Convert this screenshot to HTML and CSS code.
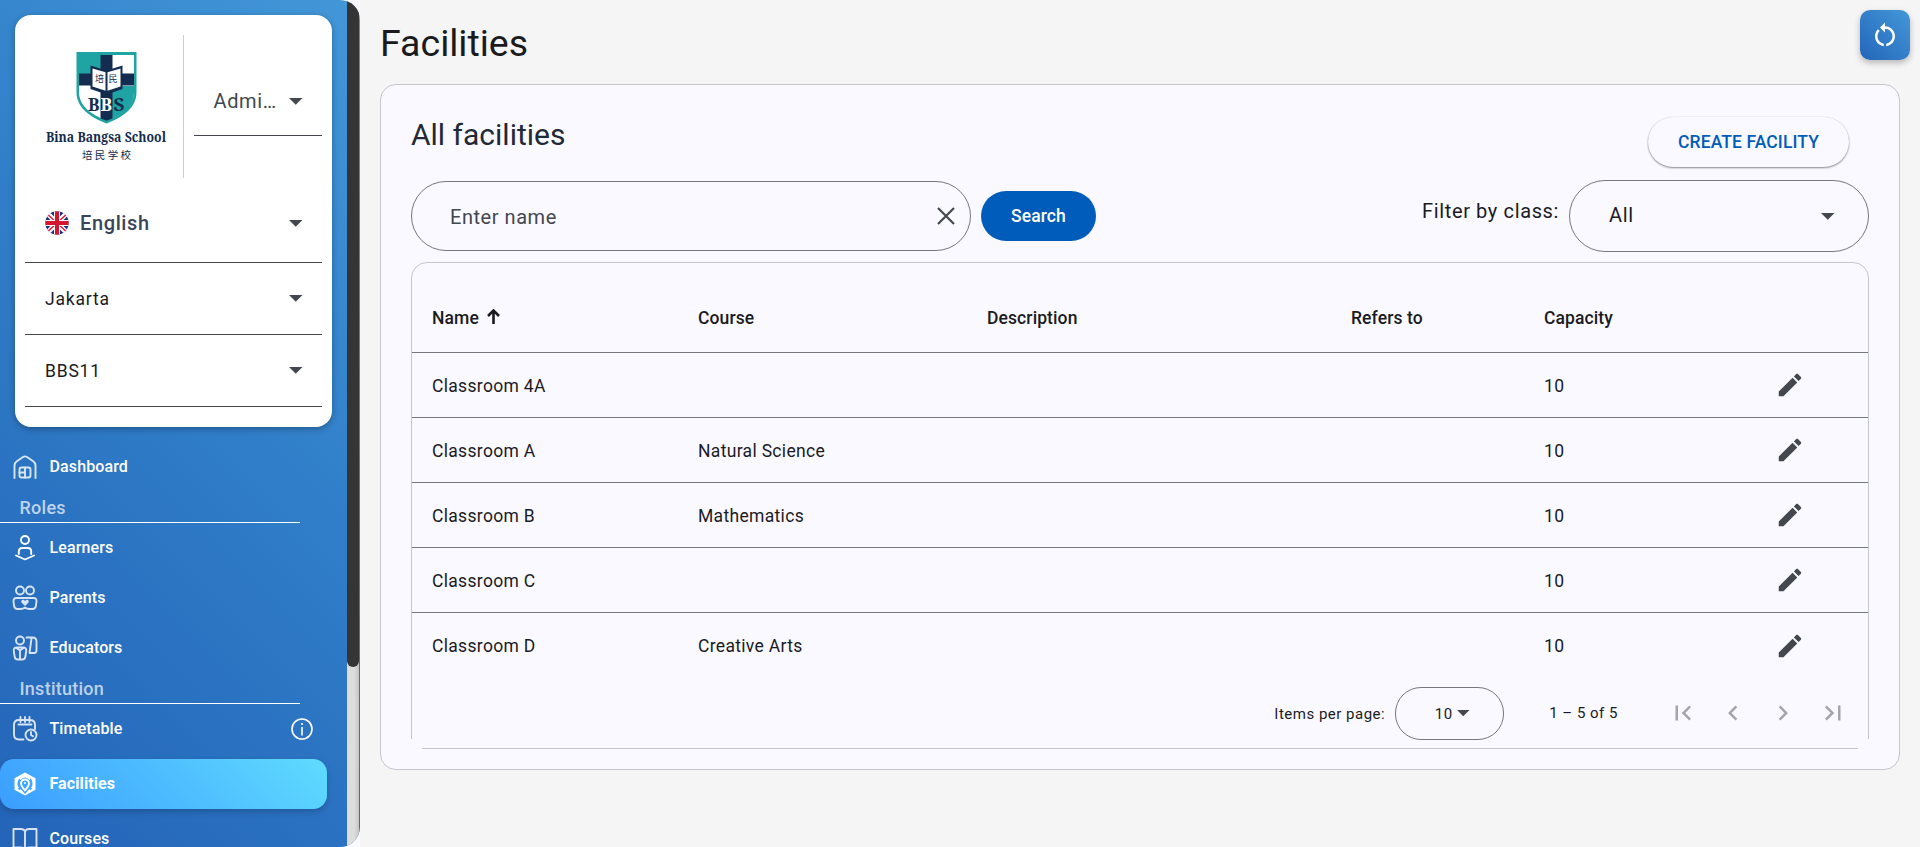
FILE: index.html
```html
<!DOCTYPE html>
<html lang="en">
<head>
<meta charset="utf-8">
<title>Facilities</title>
<link rel="stylesheet" href="styles.css">
</head>
<body>
<svg class="defs" width="0" height="0">
  <symbol id="caret" viewBox="0 0 14 7"><path d="M0 0h13.5L6.75 6.8z"/></symbol>
  <symbol id="pencil" viewBox="0 0 24 24"><path d="M3 17.25V21h3.75L17.81 9.94l-3.75-3.75L3 17.25zM20.71 7.04c.39-.39.39-1.02 0-1.41l-2.34-2.34c-.39-.39-1.02-.39-1.41 0l-1.83 1.83 3.75 3.75 1.83-1.83z"/></symbol>
</svg>
<div class="shell">
  <aside class="sidebar">
    <div class="content">
      <section class="profile">
        <div class="brand-row">
          <div class="brand">
            <svg class="logo" width="130" height="116" viewBox="0 0 130 116" role="img" aria-label="Bina Bangsa School">
              <path d="M32.5 2h60v40c0 16-14 25.500-30 31.500C46.500 67.500 32.500 58 32.500 42z" fill="#20a3a3"/>
              <path d="M62.500 5H90v37c0 14-12 22.500-27.500 28.500C47 64.500 35 56 35 42V34H62.500z" fill="#fff"/>
              <path d="M68 36h22v6c0 14-10 21-22 26.500z" fill="#20a3a3"/>
              <path d="M56.500 5h12v63.500l-6 2.300-6-2.300zM35 23.500h55v12H35z" fill="#132c50"/>
              <path d="M46.500 15.500l16 5 16-5v23.500l-16 5.500-16-5.500z" fill="#132c50"/>
              <path d="M48.500 18.500l13 3.800v18.500l-13-4.300zM76.500 18.500l-13 3.800v18.500l13-4.300z" fill="#fff"/>
              <text class="logo-cjk" x="51" y="32" font-size="9">培</text>
              <text class="logo-cjk" x="64.500" y="32" font-size="9">民</text>
              <text class="logo-serif" x="44" y="61" font-size="18" textLength="11.500" lengthAdjust="spacingAndGlyphs">B</text>
              <text class="logo-serif light" x="56.500" y="61" font-size="18" textLength="11.500" lengthAdjust="spacingAndGlyphs">B</text>
              <text class="logo-serif" x="69.500" y="61" font-size="18" textLength="11" lengthAdjust="spacingAndGlyphs">S</text>
              <text class="logo-serif" x="2" y="91.500" font-size="14" textLength="120" lengthAdjust="spacingAndGlyphs">Bina Bangsa School</text>
              <text class="logo-cjk" x="38" y="108.500" font-size="10.500" textLength="49">培民学校</text>
            </svg>
          </div>
          <div class="select role"><span>Admi…</span><svg class="caret"><use href="#caret"/></svg></div>
        </div>
        <div class="select language">
          <svg class="flag" viewBox="0 0 24 24">
            <clipPath id="round"><circle cx="12" cy="12" r="11.700"/></clipPath>
            <g clip-path="url(#round)">
              <rect width="24" height="24" fill="#1b2f7d"/>
              <path d="M0 0l24 24M24 0L0 24" stroke="#fff" stroke-width="5"/>
              <path d="M0 1l24 22M24 1L0 23" stroke="#d8213f" stroke-width="1.500"/>
              <path d="M12 0v24M0 12h24" stroke="#fff" stroke-width="6"/>
              <path d="M12 0v24M0 12h24" stroke="#d5152e" stroke-width="4"/>
            </g>
          </svg>
          <span>English</span><svg class="caret"><use href="#caret"/></svg>
        </div>
        <div class="select"><span>Jakarta</span><svg class="caret"><use href="#caret"/></svg></div>
        <div class="select"><span>BBS11</span><svg class="caret"><use href="#caret"/></svg></div>
      </section>

      <nav class="menu">
        <a class="item dashboard">
          <svg class="icon" viewBox="0 0 26 26"><path d="M2.500 24V11.500Q2.500 9 4.500 7.500L11 3q2-1.300 4 0l6.500 4.500q2 1.500 2 4V24"/><rect x="7.500" y="13.500" width="11" height="10" rx="2"/><path d="M13 13.500v10M7.500 18.500H13" /></svg>
          <span>Dashboard</span>
        </a>
        <h2 class="group">Roles</h2>
        <a class="item">
          <svg class="icon bright" viewBox="0 0 26 26"><circle cx="13" cy="5" r="4"/><path d="M6.800 19v-2.500q0-3.500 3.500-3.500h5.400q3.500 0 3.500 3.500V19M4 20.500l9 4 9-4"/></svg>
          <span>Learners</span>
        </a>
        <a class="item">
          <svg class="icon" viewBox="0 0 26 26"><circle cx="8" cy="5.500" r="4"/><circle cx="18" cy="5.500" r="4"/><path d="M4.500 13h17q3.300 0 3 3.500l-.6 4.300q-.5 3.200-3.500 3.200h-3.200q-2 0-4.200-1.500Q10.800 24 8.800 24H5.600q-3 0-3.500-3.200l-.6-4.300Q1.200 13 4.500 13z"/><path class="solid" d="M13 21l-3.500-3.400c-1.300-2.800 2-4 3.500-1.700 1.500-2.300 4.800-1.100 3.500 1.700z"/></svg>
          <span>Parents</span>
        </a>
        <a class="item">
          <svg class="icon" viewBox="0 0 26 26"><circle cx="8" cy="5.500" r="4"/><path d="M5 12.500h6q3.800 0 3.200 3.500l-.8 5.500q-.5 3-3 3H5.600q-2.500 0-3-3L1.800 16q-.6-3.500 3.200-3.500zM4.500 13L8 15.500l3.500-2.500M8 15.500v8M14.500 2.500h6q4 0 4 4v9q0 2.500-2.500 2.500h-4.500M19.500 3.500l-2 14.300"/></svg>
          <span>Educators</span>
        </a>
        <h2 class="group">Institution</h2>
        <a class="item">
          <svg class="icon" viewBox="0 0 26 26"><path d="M11.500 23.500H7q-5 0-5-5V9q0-5 5-5h11q5 0 5 5v4M6.500 8.500h13M8.500 1v5M13 1v5M17.500 1v5"/><circle cx="19" cy="19" r="5.500"/><path d="M19 16v3l2 1.300"/></svg>
          <span>Timetable</span>
          <svg class="info" viewBox="0 0 22 22"><circle cx="11" cy="11" r="10"/><path d="M11 9v8.500M11 5v2"/></svg>
        </a>
        <a class="item active">
          <svg class="icon bright" viewBox="0 0 26 26"><path class="solid" fill-rule="evenodd" d="M13 1.500l10.500 5.700v11.600L13 24.500 2.500 18.800V7.200zM7 7.500Q4 13 7 17l-1.500.5 2 1.600 1.300-.8L13 23l4.200-4.700 1.300.8 2-1.600L19 17q3-4 0-9.500L17.500 9Q13 4 8.500 9z"/><path d="M13 19.500c-2-2.500-4-4.500-4-7a4 4 0 018 0c0 2.500-2 4.500-4 7z"/><circle class="solid" cx="13" cy="12" r="1"/></svg>
          <span>Facilities</span>
        </a>
        <a class="item courses">
          <svg class="icon" viewBox="0 0 26 26"><path d="M13 5.500Q12 3 9 3H1.500v18.500H9q3 0 4 2.500 1-2.500 4-2.500h7.500V3H17q-3 0-4 2.500zV24"/></svg>
          <span>Courses</span>
        </a>
      </nav>
    </div>
    <div class="track"><div class="thumb"></div></div>
  </aside>

  <main class="main">
    <header class="page-head">
      <h1>Facilities</h1>
      <button class="reset" aria-label="Reset"><svg width="30" height="30" viewBox="0 0 24 24" fill="#fff"><path d="M12 5V2L8 6l4 4V7c3.310 0 6 2.690 6 6 0 2.970-2.170 5.430-5 5.910v2.020c3.950-.49 7-3.850 7-7.930 0-4.420-3.580-8-8-8zM6 13c0-1.650.67-3.150 1.760-4.240L6.340 7.340C4.900 8.790 4 10.790 4 13c0 4.080 3.050 7.440 7 7.930v-2.020c-2.830-.48-5-2.940-5-5.910z"/></svg></button>
    </header>
    <section class="panel">
      <div class="panel-head">
        <h2>All facilities</h2>
        <button class="create">CREATE FACILITY</button>
      </div>
      <div class="filters">
        <div class="search-field"><span>Enter name</span><svg width="18" height="18" viewBox="0 0 18 18"><path d="M1 1l16 16M17 1L1 17"/></svg></div>
        <button class="search">Search</button>
        <label class="filter-label">Filter by class:</label>
        <div class="class-select"><span>All</span><svg class="caret"><use href="#caret"/></svg></div>
      </div>
      <div class="table-card">
        <table>
          <colgroup><col class="c-name"><col class="c-course"><col class="c-desc"><col class="c-ref"><col class="c-cap"><col></colgroup>
          <thead><tr><th>Name<svg class="sort" width="13" height="15" viewBox="0 0 13 15"><path d="M6.500 15V2M1 7l5.500-5.500L12 7"/></svg></th><th>Course</th><th>Description</th><th>Refers to</th><th>Capacity</th><th></th></tr></thead>
          <tbody>
            <tr><td>Classroom 4A</td><td></td><td></td><td></td><td>10</td><td><svg class="edit"><use href="#pencil"/></svg></td></tr>
            <tr><td>Classroom A</td><td>Natural Science</td><td></td><td></td><td>10</td><td><svg class="edit"><use href="#pencil"/></svg></td></tr>
            <tr><td>Classroom B</td><td>Mathematics</td><td></td><td></td><td>10</td><td><svg class="edit"><use href="#pencil"/></svg></td></tr>
            <tr><td>Classroom C</td><td></td><td></td><td></td><td>10</td><td><svg class="edit"><use href="#pencil"/></svg></td></tr>
            <tr><td>Classroom D</td><td>Creative Arts</td><td></td><td></td><td>10</td><td><svg class="edit"><use href="#pencil"/></svg></td></tr>
          </tbody>
        </table>
        <div class="paginator">
          <span class="ipp">Items per page:</span>
          <div class="size-select"><span>10</span><svg class="caret small"><use href="#caret"/></svg></div>
          <span class="range">1 – 5 of 5</span>
          <div class="pager">
            <svg viewBox="0 0 24 24"><path d="M18.410 16.590L13.820 12l4.590-4.590L17 6l-6 6 6 6zM6 6h2v12H6z"/></svg>
            <svg viewBox="0 0 24 24"><path d="M15.410 7.410L14 6l-6 6 6 6 1.410-1.410L10.830 12z"/></svg>
            <svg viewBox="0 0 24 24"><path d="M10 6L8.590 7.410 13.170 12l-4.580 4.590L10 18l6-6z"/></svg>
            <svg viewBox="0 0 24 24"><path d="M5.590 7.410L10.180 12l-4.590 4.590L7 18l6-6-6-6zM16 6h2v12h-2z"/></svg>
          </div>
        </div>
      </div>
    </section>
  </main>
</div>
</body>
</html>
```
FILE: styles.css
```css
* { box-sizing: border-box; }
body { margin: 0; overflow: hidden; font-family: Roboto, "Noto Sans", sans-serif; color: #1a1b1f; }
h1, h2 { margin: 0; font-weight: 400; }
button { font-family: inherit; border: 0; padding: 0; }
svg { flex: none; }
.defs { position: absolute; }
.shell { display: flex; height: 847px; background: #faf9ff; }

.sidebar { display: flex; width: 360px; height: 847px; padding-right: 1px; overflow: hidden; border-radius: 0 20px 20px 0; background: linear-gradient(45deg, #2464b8 0%, #307ec9 55%, #4397d8 100%); }
.content { width: 347px; height: 847px; overflow: hidden; }
.track { width: 12px; background: linear-gradient(90deg, #ddd 60%, #c4c4c4); }
.thumb { height: 667px; border-radius: 0 0 6px 6px; background: #353535; }

.profile { width: 317px; height: 412px; margin: 15px 0 0 15px; padding: 20px 10px 0; border-radius: 16px; background: #fff; box-shadow: 0 2px 6px rgba(0, 0, 0, .3); }
.brand-row { display: flex; height: 143px; }
.brand { width: 159px; padding: 15px 0 0 18.500px; border-right: 1px solid #cfcfd3; }
.logo { overflow: visible; }
.logo-serif { font-family: "Noto Serif", "Liberation Serif", serif; font-weight: 700; fill: #132c50; }
.logo-serif.light { fill: #fff; }
.logo-cjk { font-family: "Noto Sans CJK SC", sans-serif; font-weight: 400; fill: #132c50; }
.select { display: flex; align-items: center; height: 72px; padding: 0 19px 0 20px; border-bottom: 1px solid #44474e; font-size: 17.500px; letter-spacing: .8px; }
.select.role { width: 128px; height: 101px; margin-left: 10px; padding: 51px 19px 0 19.500px; align-items: flex-start; font-size: 20px; letter-spacing: .625px; color: #44474e; }
.select.role .caret { margin-top: 12px; }
.select.role span { line-height: 30px; }
.select.language { height: 85px; padding-top: 6px; font-size: 20px; letter-spacing: .625px; font-weight: 500; color: #3b4559; }
.caret { width: 14px; height: 7px; margin-left: auto; fill: #44474e; }
.caret.small { width: 13px; height: 6.500px; margin: 0; }
.flag { width: 24px; height: 24px; margin-right: 11px; }

.menu { color: #fff; font-size: 16px; font-weight: 500; letter-spacing: .12px; }
.item { display: flex; align-items: center; height: 50px; padding: 0 14px 0 12px; width: 327px; }
.item span { padding-bottom: 2px; }
.icon { width: 26px; height: 26px; margin-right: 11.500px; fill: none; stroke: #fff; stroke-width: 1.900; stroke-linecap: round; stroke-linejoin: round; opacity: .82; }
.icon.bright { opacity: 1; }
.icon .solid { fill: #fff; stroke: none; }
.dashboard { height: 50px; margin-top: 15px; }
.group { width: 300px; height: 31px; padding-left: 19.500px; border-bottom: 1px solid #fff; line-height: 32px; font-size: 18px; font-weight: 500; letter-spacing: .25px; color: rgba(255, 255, 255, .7); }
.info { width: 22px; height: 22px; margin-left: auto; fill: none; stroke: #fff; stroke-width: 1.600; }
.active { height: 50px; margin: 5px 0; border-radius: 14px; background: linear-gradient(45deg, #3b9dff, #5fdbff); box-shadow: 0 3px 6px rgba(0, 0, 0, .2); font-weight: 700; letter-spacing: .1px; }

.main { flex: 1; padding: 10px 10px 0 20px; background: #f5f5f5; }
.page-head { display: flex; justify-content: space-between; height: 74px; }
.page-head h1 { font-size: 37.500px; line-height: 67px; }
.reset { display: flex; align-items: center; justify-content: center; width: 50px; height: 50px; border-radius: 10px; background: linear-gradient(45deg, #2466ba, #4397d8); box-shadow: 0 3px 6px rgba(0, 0, 0, .25); }
.panel { width: 1520px; height: 686px; padding: 32px 30px 0; border: 1px solid #c4c6d0; border-radius: 16px; background: #faf9ff; }
.panel-head { display: flex; justify-content: space-between; height: 63px; padding-right: 20px; }
.panel-head h2 { font-size: 30px; line-height: 35px; color: #1f2937; }
.create { width: 201px; height: 50px; border-radius: 25px; background: #faf9ff; box-shadow: 0 1px 2px rgba(0, 0, 0, .45), 0 0 1px rgba(0, 0, 0, .15); color: #005cbb; font-size: 17.500px; font-weight: 500; letter-spacing: .1px; }
.filters { display: flex; align-items: center; height: 72px; width: 1458px; }
.search-field { display: flex; align-items: center; justify-content: space-between; width: 560px; height: 70px; padding: 0 15px 0 38px; border: 1px solid #74777f; border-radius: 35px; font-size: 20px; letter-spacing: .55px; color: #44474e; }
.search-field span { padding-top: 2px; }
.search-field path { stroke: #44474e; stroke-width: 2.200; }
.search { width: 115px; height: 50px; margin-left: 10px; border-radius: 25px; background: #005cbb; color: #fff; font-size: 17.500px; font-weight: 500; letter-spacing: .1px; }
.filter-label { margin: -10px 10px 0 auto; font-size: 20px; letter-spacing: .625px; }
.class-select { display: flex; align-items: center; width: 300px; height: 72px; padding: 0 33px 0 39px; border: 1px solid #74777f; border-radius: 36px; font-size: 20px; letter-spacing: .625px; }
.class-select span { padding-bottom: 2px; }

.table-card { position: relative; width: 1458px; height: 487px; margin-top: 10px; border: 1px solid #c4c6d0; border-radius: 16px 16px 0 0; }
.table-card::before, .table-card::after { content: ""; position: absolute; bottom: -1px; width: 11px; height: 10px; background: #faf9ff; }
.table-card::before { left: -1px; }
.table-card::after { right: -1px; }
table { width: 100%; table-layout: fixed; border-collapse: separate; border-spacing: 0; font-size: 17.500px; letter-spacing: .32px; }
th { height: 90px; padding: 20px 0 0 20px; border-bottom: 1px solid #74777f; text-align: left; font-weight: 500; letter-spacing: .1px; }
td { height: 65px; padding: 1px 0 0 20px; border-bottom: 1px solid #74777f; }
tbody tr:last-child td { border-bottom: 0; }
td:last-child { padding-top: 0; }
.c-name { width: 266px; }
.c-course { width: 289px; }
.c-desc { width: 364px; }
.c-ref { width: 193px; }
.c-cap { width: 231px; }
.sort { margin-left: 8px; fill: none; stroke: #1a1b1f; stroke-width: 2.600; }
.edit { display: block; width: 30px; height: 30px; fill: #44474e; }
.paginator { display: flex; align-items: center; justify-content: flex-end; height: 70px; padding-right: 10px; font-size: 15px; letter-spacing: .5px; }
.ipp { padding-top: 2px; }
.size-select { display: flex; align-items: center; justify-content: center; gap: 4px; width: 109px; height: 53px; margin-left: 10px; padding: 1px 0 0 5px; border: 1px solid #74777f; border-radius: 26px; }
.range { margin: 0 40px 0 45px; }
.pager { display: flex; }
.pager svg { width: 30px; height: 30px; margin: 0 10px; fill: #a4a4a9; }
```
